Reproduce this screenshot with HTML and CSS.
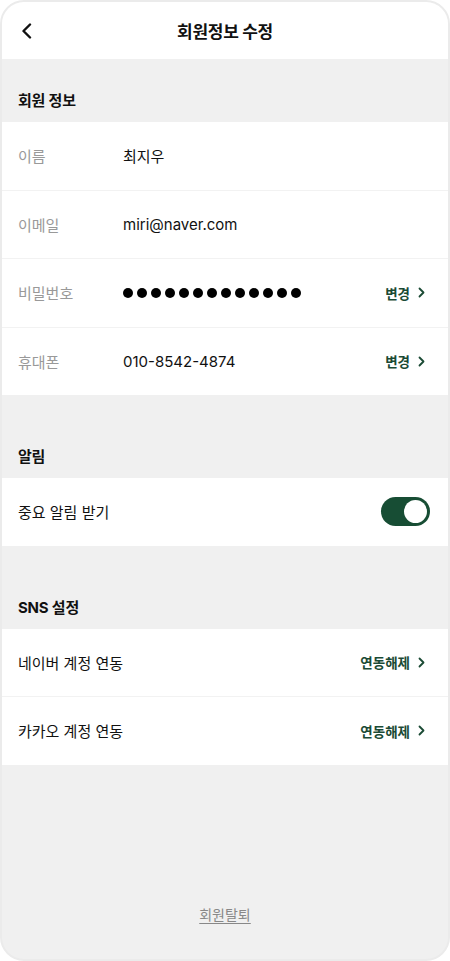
FILE: index.html
```html
<!DOCTYPE html>
<html lang="ko">
  <head>
    <meta charset="utf-8">
    <meta name="viewport" content="width=device-width, initial-scale=1.0">
    <title>회원정보 수정</title>
    <link rel="stylesheet" href="styles.css">
  </head>
  <body>
    <div class="phone">
      <header class="topBar">
        <a class="backBtn" href="#">
          <svg width="12" height="16" viewBox="0 0 12 16"><path d="M9 1.5 L2.5 8 L9 14.5" fill="none" stroke="#111" stroke-width="2.4" stroke-linecap="round" stroke-linejoin="round"/></svg>
        </a>
        <h1>회원정보 수정</h1>
      </header>

      <section class="sxn">
        <h2>회원 정보</h2>
        <ul class="rowList">
          <li class="row">
            <span class="label">이름</span>
            <span class="value">최지우</span>
          </li>
          <li class="row">
            <span class="label">이메일</span>
            <span class="value">miri@naver.com</span>
          </li>
          <li class="row">
            <span class="label">비밀번호</span>
            <span class="value dots"><i></i><i></i><i></i><i></i><i></i><i></i><i></i><i></i><i></i><i></i><i></i><i></i><i></i></span>
            <a class="action" href="#">변경 <svg width="7" height="11" viewBox="0 0 7 11"><path d="M1.5 1.5 L5.5 5.5 L1.5 9.5" fill="none" stroke="#1a4a34" stroke-width="1.8" stroke-linecap="round" stroke-linejoin="round"/></svg></a>
          </li>
          <li class="row">
            <span class="label">휴대폰</span>
            <span class="value">010-8542-4874</span>
            <a class="action" href="#">변경 <svg width="7" height="11" viewBox="0 0 7 11"><path d="M1.5 1.5 L5.5 5.5 L1.5 9.5" fill="none" stroke="#1a4a34" stroke-width="1.8" stroke-linecap="round" stroke-linejoin="round"/></svg></a>
          </li>
        </ul>
      </section>

      <section class="sxn">
        <h2>알림</h2>
        <ul class="rowList">
          <li class="row">
            <span class="text">중요 알림 받기</span>
            <span class="toggle on"><span class="knob"></span></span>
          </li>
        </ul>
      </section>

      <section class="sxn">
        <h2>SNS 설정</h2>
        <ul class="rowList">
          <li class="row">
            <span class="text">네이버 계정 연동</span>
            <a class="action" href="#">연동해제 <svg width="7" height="11" viewBox="0 0 7 11"><path d="M1.5 1.5 L5.5 5.5 L1.5 9.5" fill="none" stroke="#1a4a34" stroke-width="1.8" stroke-linecap="round" stroke-linejoin="round"/></svg></a>
          </li>
          <li class="row">
            <span class="text">카카오 계정 연동</span>
            <a class="action" href="#">연동해제 <svg width="7" height="11" viewBox="0 0 7 11"><path d="M1.5 1.5 L5.5 5.5 L1.5 9.5" fill="none" stroke="#1a4a34" stroke-width="1.8" stroke-linecap="round" stroke-linejoin="round"/></svg></a>
          </li>
        </ul>
      </section>

      <footer class="footer">
        <a class="leave" href="#">회원탈퇴</a>
      </footer>
    </div>
  </body>
</html>
```

FILE: styles.css
```css
html {
  color: #111;
  font-family: Inter, 'Noto Sans CJK KR', sans-serif;
  background-color: #fff;
}
body {
  margin: 0;
  padding: 0;
}
.phone {
  display: flex;
  flex-direction: column;
  width: 450px;
  height: 961px;
  box-sizing: border-box;
  border: 2px solid #ebebeb;
  border-radius: 24px;
  overflow: hidden;
  background-color: #f0f0f0;
}
.topBar {
  position: relative;
  height: 57px;
  display: flex;
  align-items: center;
  justify-content: center;
  background-color: #fff;
}
.topBar h1 {
  margin: 0;
  font-size: 17px;
  font-weight: 700;
  letter-spacing: -0.3px;
}
.backBtn {
  position: absolute;
  left: 19px;
  top: 21px;
  display: block;
  width: 12px;
  height: 16px;
}
.backBtn svg {
  display: block;
}
.sxn + .sxn {
  margin-top: 20px;
}
.sxn h2 {
  margin: 0;
  padding: 32px 16px 12px 16px;
  font-size: 15px;
  line-height: 19px;
  font-weight: 700;
  letter-spacing: -0.2px;
}
.rowList {
  margin: 0;
  padding: 0;
  list-style-type: none;
  background-color: #fff;
}
.row {
  display: flex;
  align-items: center;
  height: 67.5px;
  padding: 0 23px 0 16px;
  font-size: 15px;
}
.row + .row {
  border-top: 1px solid #f2f2f2;
}
.label {
  width: 105px;
  color: #999;
}
.value {
  flex: 1;
  color: #111;
}
.text {
  flex: 1;
}
.dots {
  display: flex;
  gap: 4px;
}
.dots i {
  display: block;
  width: 10px;
  height: 10px;
  border-radius: 50%;
  background-color: #000;
}
.action {
  display: flex;
  align-items: center;
  gap: 8px;
  font-size: 13.5px;
  font-weight: 600;
  color: #1a4a34;
  text-decoration: none;
}
.action svg {
  display: block;
}
.toggle {
  display: flex;
  align-items: center;
  box-sizing: border-box;
  width: 49px;
  height: 29px;
  padding: 3px;
  border-radius: 15px;
  background-color: #ccc;
  margin-right: -5px;
}
.toggle.on {
  justify-content: flex-end;
  background-color: #174d34;
}
.knob {
  display: block;
  width: 23px;
  height: 23px;
  border-radius: 50%;
  background-color: #fff;
}
.footer {
  margin-top: auto;
  padding: 0 0 35px 0;
  text-align: center;
}
.leave {
  font-size: 14px;
  color: #888;
  text-decoration: underline;
  text-underline-offset: 3px;
}
```
